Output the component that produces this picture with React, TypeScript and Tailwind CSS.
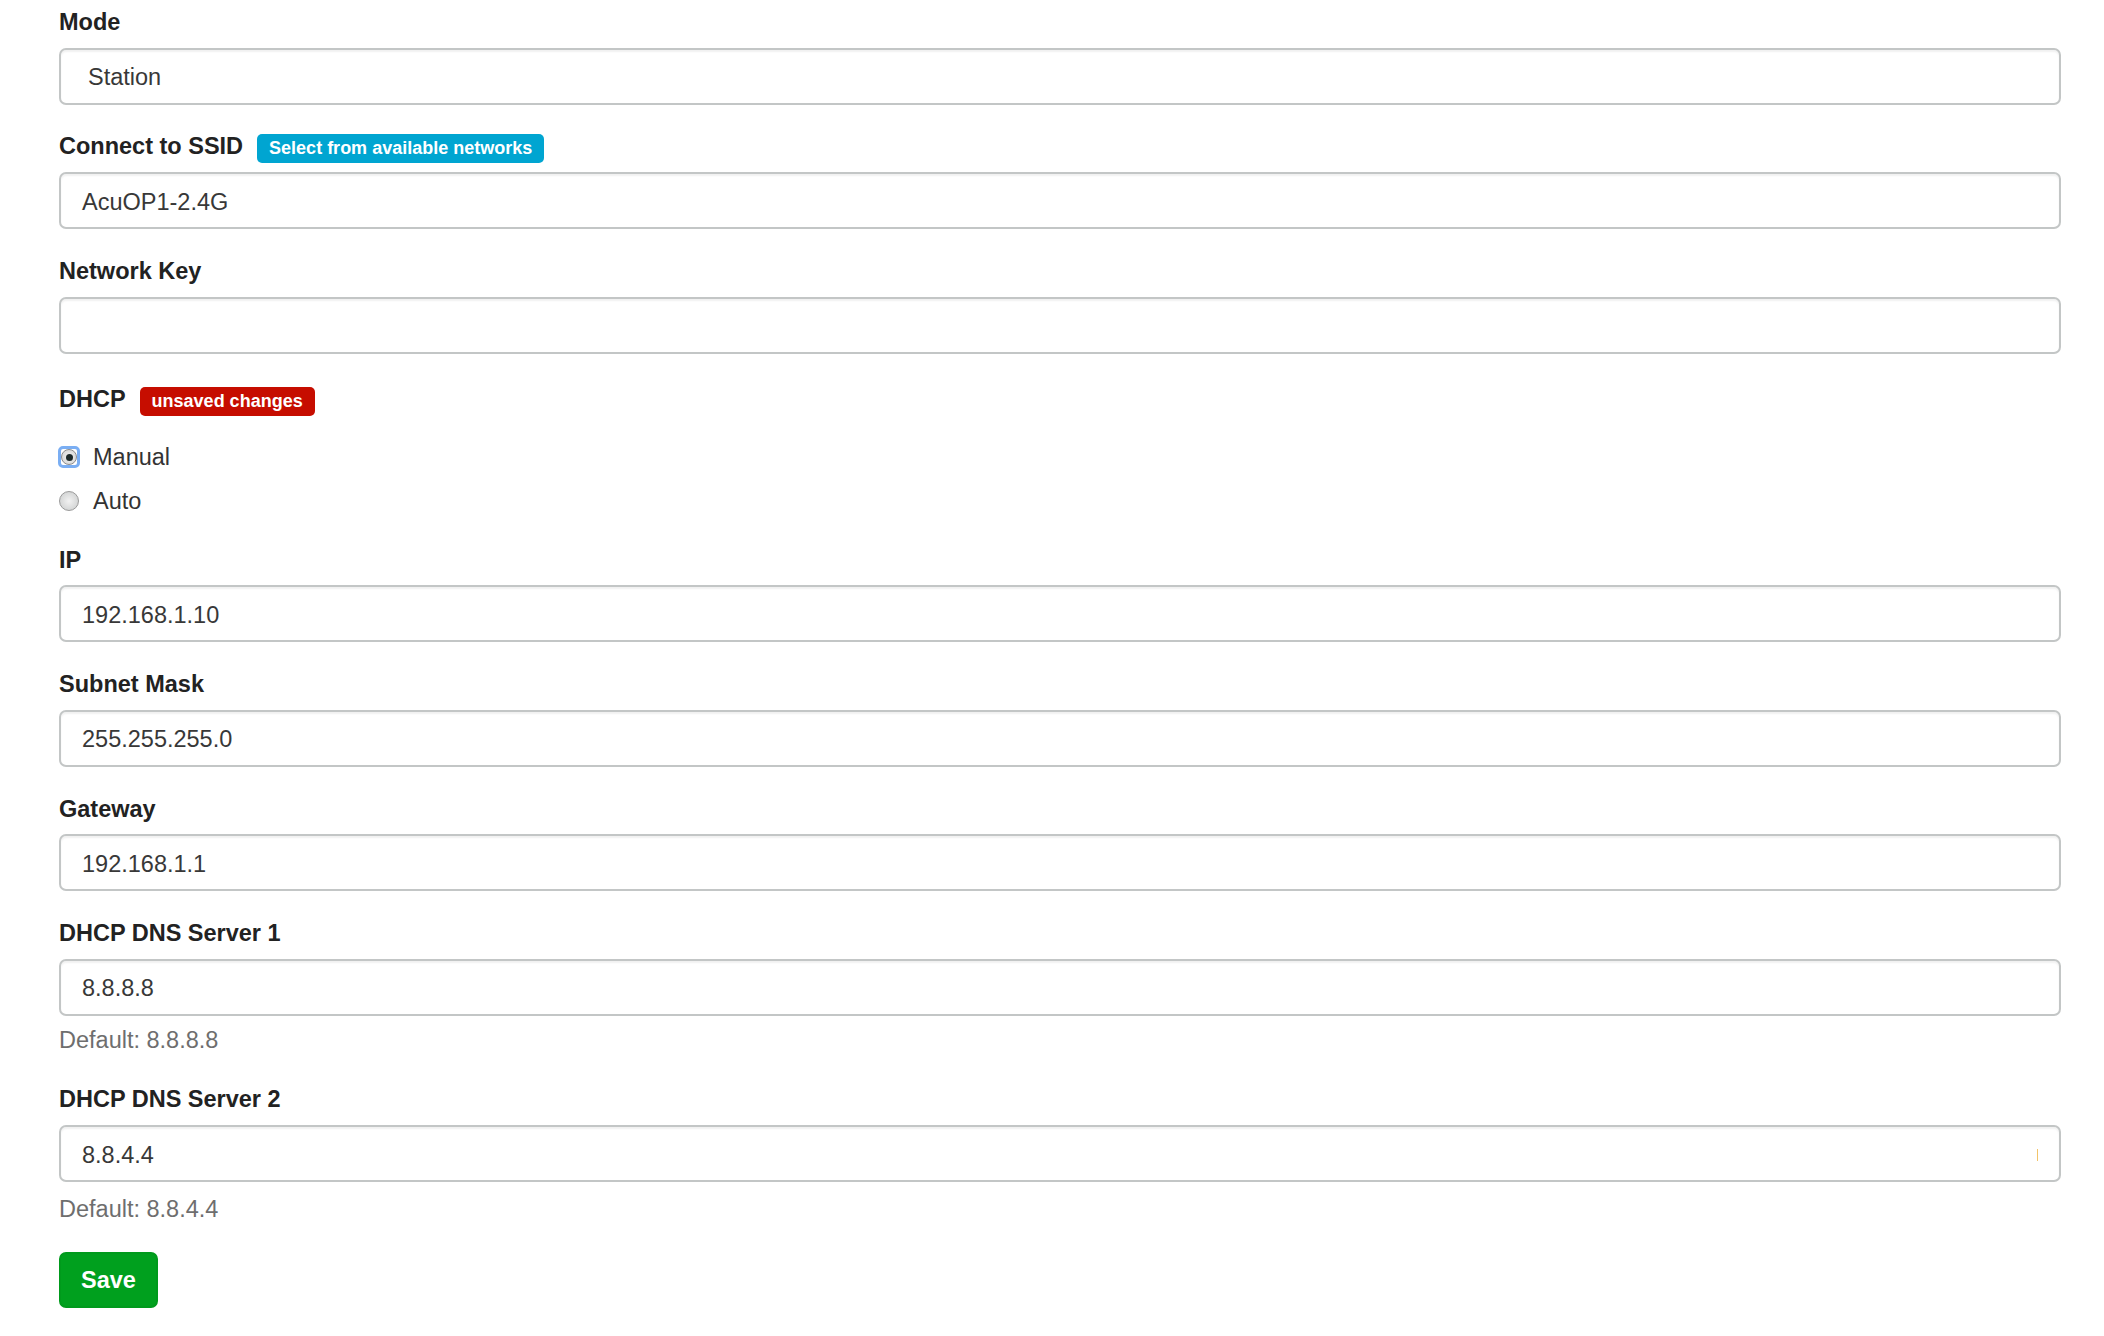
import React from "react";

const font = { fontFamily: '"Liberation Sans", Arial, Helvetica, sans-serif' };

function Label({ children }: { children: React.ReactNode }) {
  return (
    <div className="text-[23.5px] leading-[33.5px] font-bold text-[#222] mb-[8.4px] whitespace-nowrap">
      {children}
    </div>
  );
}

function Field({ value, select, marker }: { value: string; select?: boolean; marker?: boolean }) {
  return (
    <div
      className={`relative h-[57px] w-[2002px] border-2 border-[#c3c6c6] rounded-[7px] bg-white flex items-center pt-[3px] text-[23.5px] text-[#383838] shadow-[inset_0_2px_2px_rgba(0,0,0,0.06)] ${
        select ? "pl-[27px]" : "pl-[21px]"
      }`}
    >
      {value}
      {marker && <span className="absolute right-[21px] top-[22px] w-[1px] h-[12px] bg-[#f2c46a]" />}
    </div>
  );
}

function Group({
  label,
  children,
  help,
  helpTop = "mt-[8.4px]",
}: {
  label: React.ReactNode;
  children: React.ReactNode;
  help?: string;
  helpTop?: string;
}) {
  return (
    <div className="mb-[25.6px]">
      <Label>{label}</Label>
      {children}
      {help && <div className={`${helpTop} text-[23.5px] leading-[33.5px] text-[#6e6e6e]`}>{help}</div>}
    </div>
  );
}

function Radio({ label, checked, className }: { label: string; checked?: boolean; className?: string }) {
  return (
    <div className={`flex items-center h-[33.5px] text-[23.5px] text-[#333] ${className ?? ""}`}>
      <span className="ml-[-1px] w-[22px] h-[22px] flex items-center justify-center">
        {checked ? (
          <span className="w-[22px] h-[22px] rounded-[5px] border-[3px] border-[#7aaef3] flex items-center justify-center">
            <span className="w-[16px] h-[16px] rounded-full border border-[#8c8c8c] bg-[radial-gradient(circle,#f4f4f4_0%,#cfcfcf_100%)] flex items-center justify-center">
              <span className="w-[7px] h-[7px] rounded-full bg-[#1e2a2a]" />
            </span>
          </span>
        ) : (
          <span className="w-[20px] h-[20px] rounded-full border border-[#9a9a9a] bg-[radial-gradient(circle,#f2f2f2_0%,#c9cbcb_100%)]" />
        )}
      </span>
      <span className="ml-[13px]">{label}</span>
    </div>
  );
}

function Badge({ children, color }: { children: React.ReactNode; color: string }) {
  return (
    <span
      className={`inline-block ml-[14px] px-[12px] pt-[5px] pb-[6px] text-[18px] leading-[18px] font-bold text-white rounded-[5px] align-baseline ${color}`}
    >
      {children}
    </span>
  );
}

export default function App() {
  return (
    <div className="min-h-screen w-full bg-white" style={font}>
      <div className="pl-[59px] pt-[6px]">
        <Group label="Mode">
          <Field value="Station" select />
        </Group>
        <Group
          label={
            <>
              Connect to SSID
              <Badge color="bg-[#00a5d1]">Select from available networks</Badge>
            </>
          }
        >
          <Field value="AcuOP1-2.4G" />
        </Group>
        <Group label="Network Key">
          <Field value="" />
        </Group>
        <div className="pt-[4px] mb-[25.6px]">
          <Label>
            DHCP
            <Badge color="bg-[#c60d00]">unsaved changes</Badge>
          </Label>
          <Radio label="Manual" checked className="mt-[23.5px]" />
          <Radio label="Auto" className="mt-[10.5px]" />
        </div>
        <Group label="IP">
          <Field value="192.168.1.10" />
        </Group>
        <Group label="Subnet Mask">
          <Field value="255.255.255.0" />
        </Group>
        <Group label="Gateway">
          <Field value="192.168.1.1" />
        </Group>
        <Group label="DHCP DNS Server 1" help="Default: 8.8.8.8">
          <Field value="8.8.8.8" />
        </Group>
        <Group label="DHCP DNS Server 2" help="Default: 8.8.4.4" helpTop="mt-[11px]">
          <Field value="8.8.4.4" marker />
        </Group>
        <button className="h-[56px] px-[20px] rounded-[7px] bg-[#00a01e] border-2 border-[#009a1c] text-white font-bold text-[23.5px] leading-none">
          Save
        </button>
      </div>
    </div>
  );
}
